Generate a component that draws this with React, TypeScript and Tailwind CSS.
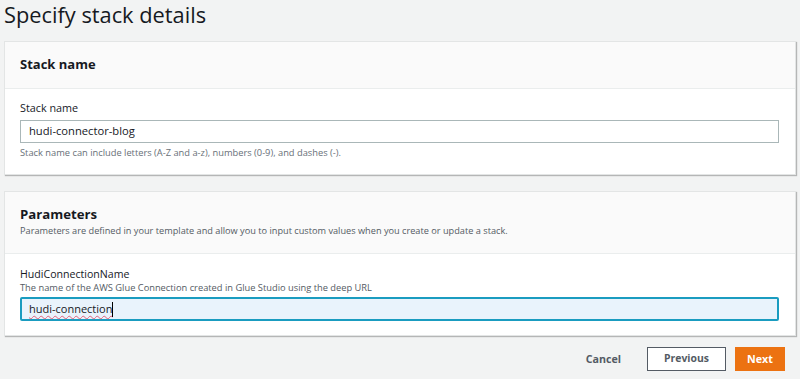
// Stack details step of a create-stack wizard

const font = { fontFamily: '"Open Sans", "Noto Sans", Arial, sans-serif' };

function Panel({ children }: { children: React.ReactNode }) {
  return (
    <div className="mx-[4px] bg-white border border-[#e3e5e5] shadow-[1px_1px_1px_rgba(0,0,0,0.25)]">
      {children}
    </div>
  );
}

export default function App() {
  return (
    <div className="w-[800px] h-[379px] bg-[#f2f3f3] text-[#16191f] overflow-hidden" style={font}>
      <h1 className="px-[4px] pt-[1px] h-[41px] text-[21.8px] leading-[28px]">Specify stack details</h1>

      <Panel>
        <div className="h-[47px] bg-[#fafafa] border-b border-[#eaeded] px-[15px] flex items-center">
          <h2 className="text-[13px] font-bold">Stack name</h2>
        </div>
        <div className="px-[15px] pt-[11px] pb-[13px]">
          <label className="block text-[10.8px] leading-[16px] mb-[4px]">Stack name</label>
          <div className="w-[759px] h-[23px] border border-[#aab7b8] bg-white flex items-center px-[8px] text-[11.2px]">
            hudi-connector-blog
          </div>
          <p className="mt-[2px] text-[9.3px] leading-[16px] text-[#687078]">
            Stack name can include letters (A-Z and a-z), numbers (0-9), and dashes (-).
          </p>
        </div>
      </Panel>

      <div className="h-[16px]" />

      <Panel>
        <div className="h-[62px] bg-[#fafafa] border-b border-[#eaeded] px-[15px] pt-[14px]">
          <h2 className="text-[13.2px] leading-[17px] font-bold">Parameters</h2>
          <p className="text-[9.2px] leading-[16px] text-[#545b64]">
            Parameters are defined in your template and allow you to input custom values when you create or update a stack.
          </p>
        </div>
        <div className="px-[15px] pt-[13px] pb-[14px]">
          <label className="block text-[10.6px] leading-[14px]">HudiConnectionName</label>
          <p className="text-[9.3px] leading-[14px] text-[#545b64] mb-[2px]">
            The name of the AWS Glue Connection created in Glue Studio using the deep URL
          </p>
          <div className="w-[759px] h-[24px] border-2 border-[#1a9cc0] rounded-[2px] bg-[#e9f3fc] flex items-center px-[7px] text-[11px]">
            <span className="underline decoration-wavy decoration-[#e0607a] decoration-1 underline-offset-2">hudi-connection</span>
            <span className="w-px h-[15px] bg-black" />
          </div>
        </div>
      </Panel>

      <div className="flex items-center justify-end gap-[9px] pr-[15px] pt-[11px]">
        <button className="text-[10.7px] font-bold text-[#545b64] px-[17px]">Cancel</button>
        <button className="w-[79px] h-[24px] border border-[#545b64] bg-white text-[10.4px] font-bold text-[#545b64]">Previous</button>
        <button className="w-[50px] h-[24px] bg-[#ec7211] text-[10.7px] font-bold text-white">Next</button>
      </div>
    </div>
  );
}
